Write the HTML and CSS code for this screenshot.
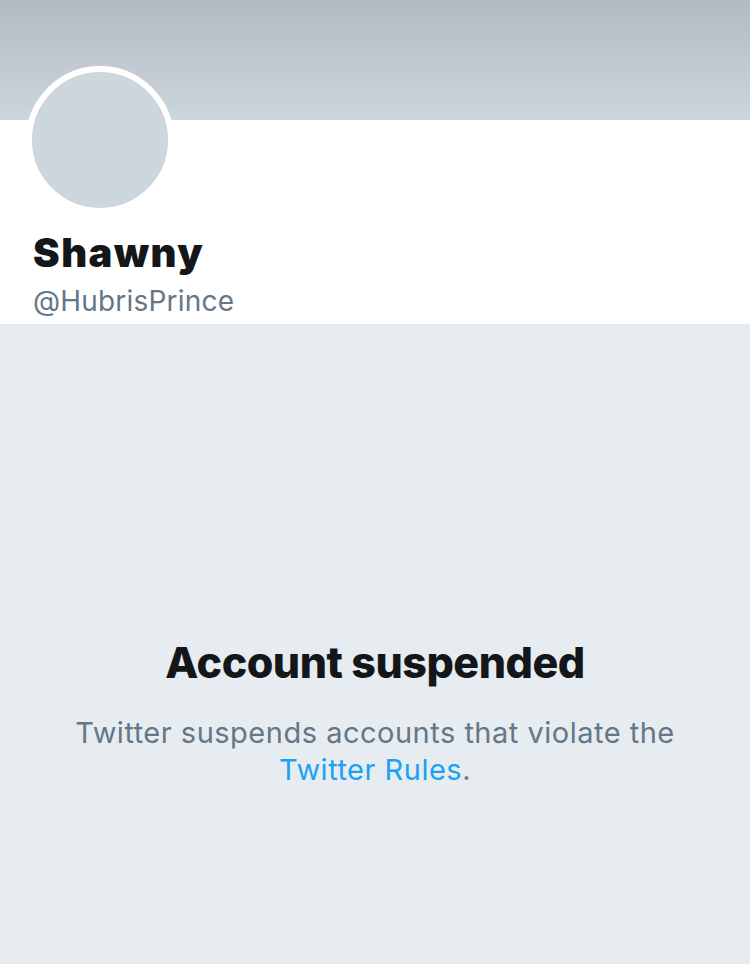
FILE: index.html
```html
<!DOCTYPE html>
<html>
<head>
<meta charset="utf-8">
<link rel="stylesheet" href="styles.css">
</head>
<body>
<div class="page">
  <header class="profile">
    <div class="banner"></div>
    <div class="info">
      <div class="avatar"></div>
      <h1 class="name">Shawny</h1>
      <div class="handle">@HubrisPrince</div>
    </div>
  </header>
  <main class="suspended">
    <h2 class="title">Account suspended</h2>
    <p class="desc">Twitter suspends accounts that violate the <a class="link" href="#">Twitter Rules</a>.</p>
  </main>
</div>
</body>
</html>
```
FILE: styles.css
```css
html, body {
  margin: 0;
  padding: 0;
  height: 100%;
}
body {
  font-family: Inter, "Liberation Sans", sans-serif;
  background: #e6ecf0;
}
.page {
  width: 750px;
  height: 964px;
  display: flex;
  flex-direction: column;
  background: #e6ecf0;
}
.profile {
  background: #fff;
  position: relative;
}
.banner {
  height: 120px;
  background: linear-gradient(to bottom, #b2bac2, #ccd6dd);
}
.info {
  padding: 109px 33px 5px;
  position: relative;
}
.avatar {
  position: absolute;
  left: 26px;
  top: -54px;
  width: 136px;
  height: 136px;
  border: 6px solid #fff;
  border-radius: 50%;
  background: #ccd6dd;
}
.name {
  margin: 0;
  font-size: 40px;
  font-weight: 900;
  color: #14171a;
  line-height: 48px;
  letter-spacing: 1.5px;
}
.handle {
  margin-top: 6px;
  font-size: 28px;
  color: #657786;
  line-height: 36px;
  letter-spacing: 0.2px;
}
.suspended {
  flex: 1;
  display: flex;
  flex-direction: column;
  align-items: center;
  padding: 312px 40px 0;
  text-align: center;
}
.title {
  margin: 0;
  font-size: 43px;
  font-weight: 800;
  color: #14171a;
  line-height: 52px;
  letter-spacing: -0.5px;
}
.desc {
  margin: 26px 0 0;
  font-size: 29px;
  line-height: 37px;
  color: #657786;
  letter-spacing: 0.5px;
}
.link {
  color: #1da1f2;
  text-decoration: none;
}
```
